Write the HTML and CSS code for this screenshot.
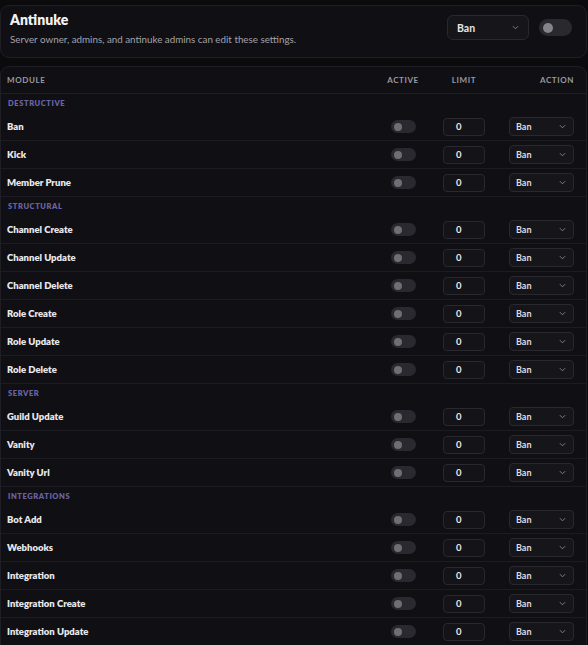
FILE: index.html
```html
<!DOCTYPE html>
<html lang="en">
<head>
    <meta charset="UTF-8">
    <meta name="viewport" content="width=device-width, initial-scale=1.0">
    <title>Antinuke</title>
    <link rel="stylesheet" href="styles.css">
</head>

<body>
    <!-- Settings header -->
    <div class="card header-card">
        <div class="header-text">
            <h1>Antinuke</h1>
            <p>Server owner, admins, and antinuke admins can edit these settings.</p>
        </div>
        <div class="header-controls">
            <div class="select select-lg">
                <span>Ban</span>
                <svg viewBox="0 0 8 5" class="chev"><path d="M1 1l3 3 3-3" /></svg>
            </div>
            <div class="toggle toggle-lg"><span class="knob"></span></div>
        </div>
    </div>

    <!-- Modules table -->
    <div class="card table-card">
        <div class="grid-row head-row">
            <div>Module</div>
            <div class="center">Active</div>
            <div class="center">Limit</div>
            <div class="right">Action</div>
        </div>

        <div class="section">Destructive</div>
        <div class="grid-row module-row"><div class="name">Ban</div><div class="center"><div class="toggle"><span class="knob"></span></div></div><div class="center"><div class="limit">0</div></div><div class="right"><div class="select"><span>Ban</span><svg viewBox="0 0 8 5" class="chev"><path d="M1 1l3 3 3-3" /></svg></div></div></div>
        <div class="grid-row module-row"><div class="name">Kick</div><div class="center"><div class="toggle"><span class="knob"></span></div></div><div class="center"><div class="limit">0</div></div><div class="right"><div class="select"><span>Ban</span><svg viewBox="0 0 8 5" class="chev"><path d="M1 1l3 3 3-3" /></svg></div></div></div>
        <div class="grid-row module-row"><div class="name">Member Prune</div><div class="center"><div class="toggle"><span class="knob"></span></div></div><div class="center"><div class="limit">0</div></div><div class="right"><div class="select"><span>Ban</span><svg viewBox="0 0 8 5" class="chev"><path d="M1 1l3 3 3-3" /></svg></div></div></div>

        <div class="section">Structural</div>
        <div class="grid-row module-row"><div class="name">Channel Create</div><div class="center"><div class="toggle"><span class="knob"></span></div></div><div class="center"><div class="limit">0</div></div><div class="right"><div class="select"><span>Ban</span><svg viewBox="0 0 8 5" class="chev"><path d="M1 1l3 3 3-3" /></svg></div></div></div>
        <div class="grid-row module-row"><div class="name">Channel Update</div><div class="center"><div class="toggle"><span class="knob"></span></div></div><div class="center"><div class="limit">0</div></div><div class="right"><div class="select"><span>Ban</span><svg viewBox="0 0 8 5" class="chev"><path d="M1 1l3 3 3-3" /></svg></div></div></div>
        <div class="grid-row module-row"><div class="name">Channel Delete</div><div class="center"><div class="toggle"><span class="knob"></span></div></div><div class="center"><div class="limit">0</div></div><div class="right"><div class="select"><span>Ban</span><svg viewBox="0 0 8 5" class="chev"><path d="M1 1l3 3 3-3" /></svg></div></div></div>
        <div class="grid-row module-row"><div class="name">Role Create</div><div class="center"><div class="toggle"><span class="knob"></span></div></div><div class="center"><div class="limit">0</div></div><div class="right"><div class="select"><span>Ban</span><svg viewBox="0 0 8 5" class="chev"><path d="M1 1l3 3 3-3" /></svg></div></div></div>
        <div class="grid-row module-row"><div class="name">Role Update</div><div class="center"><div class="toggle"><span class="knob"></span></div></div><div class="center"><div class="limit">0</div></div><div class="right"><div class="select"><span>Ban</span><svg viewBox="0 0 8 5" class="chev"><path d="M1 1l3 3 3-3" /></svg></div></div></div>
        <div class="grid-row module-row"><div class="name">Role Delete</div><div class="center"><div class="toggle"><span class="knob"></span></div></div><div class="center"><div class="limit">0</div></div><div class="right"><div class="select"><span>Ban</span><svg viewBox="0 0 8 5" class="chev"><path d="M1 1l3 3 3-3" /></svg></div></div></div>

        <div class="section">Server</div>
        <div class="grid-row module-row"><div class="name">Guild Update</div><div class="center"><div class="toggle"><span class="knob"></span></div></div><div class="center"><div class="limit">0</div></div><div class="right"><div class="select"><span>Ban</span><svg viewBox="0 0 8 5" class="chev"><path d="M1 1l3 3 3-3" /></svg></div></div></div>
        <div class="grid-row module-row"><div class="name">Vanity</div><div class="center"><div class="toggle"><span class="knob"></span></div></div><div class="center"><div class="limit">0</div></div><div class="right"><div class="select"><span>Ban</span><svg viewBox="0 0 8 5" class="chev"><path d="M1 1l3 3 3-3" /></svg></div></div></div>
        <div class="grid-row module-row"><div class="name">Vanity Url</div><div class="center"><div class="toggle"><span class="knob"></span></div></div><div class="center"><div class="limit">0</div></div><div class="right"><div class="select"><span>Ban</span><svg viewBox="0 0 8 5" class="chev"><path d="M1 1l3 3 3-3" /></svg></div></div></div>

        <div class="section">Integrations</div>
        <div class="grid-row module-row"><div class="name">Bot Add</div><div class="center"><div class="toggle"><span class="knob"></span></div></div><div class="center"><div class="limit">0</div></div><div class="right"><div class="select"><span>Ban</span><svg viewBox="0 0 8 5" class="chev"><path d="M1 1l3 3 3-3" /></svg></div></div></div>
        <div class="grid-row module-row"><div class="name">Webhooks</div><div class="center"><div class="toggle"><span class="knob"></span></div></div><div class="center"><div class="limit">0</div></div><div class="right"><div class="select"><span>Ban</span><svg viewBox="0 0 8 5" class="chev"><path d="M1 1l3 3 3-3" /></svg></div></div></div>
        <div class="grid-row module-row"><div class="name">Integration</div><div class="center"><div class="toggle"><span class="knob"></span></div></div><div class="center"><div class="limit">0</div></div><div class="right"><div class="select"><span>Ban</span><svg viewBox="0 0 8 5" class="chev"><path d="M1 1l3 3 3-3" /></svg></div></div></div>
        <div class="grid-row module-row"><div class="name">Integration Create</div><div class="center"><div class="toggle"><span class="knob"></span></div></div><div class="center"><div class="limit">0</div></div><div class="right"><div class="select"><span>Ban</span><svg viewBox="0 0 8 5" class="chev"><path d="M1 1l3 3 3-3" /></svg></div></div></div>
        <div class="grid-row module-row"><div class="name">Integration Update</div><div class="center"><div class="toggle"><span class="knob"></span></div></div><div class="center"><div class="limit">0</div></div><div class="right"><div class="select"><span>Ban</span><svg viewBox="0 0 8 5" class="chev"><path d="M1 1l3 3 3-3" /></svg></div></div></div>
    </div>
</body>
</html>
```

FILE: styles.css
```css
body {
    margin: 0;
    padding: 5px 1px 0 0;
    background-color: #0b0b0d;
    font-family: 'Lato', 'Inter', sans-serif;
    color: #e6e6ea;
    height: 640px;
    overflow: hidden;
}

.card {
    background-color: #100f13;
    border: 1px solid #1f1e25;
    border-radius: 9px;
}

.header-card {
    display: flex;
    align-items: center;
    justify-content: space-between;
    height: 53px;
    box-sizing: border-box;
    padding: 0 14px 8px 9px;
    margin-bottom: 8px;
}

.header-text h1 {
    margin: 0 0 5px;
    font-size: 14px;
    font-weight: 800;
    color: #f2f2f4;
}

.header-text p {
    margin: 0;
    font-size: 9.8px;
    color: #a3a2aa;
}

.header-controls {
    display: flex;
    align-items: center;
    gap: 10px;
}

.select {
    display: flex;
    align-items: center;
    justify-content: space-between;
    box-sizing: border-box;
    width: 65px;
    height: 19px;
    padding: 0 7px 0 6px;
    background-color: #16151a;
    border: 1px solid #29282f;
    border-radius: 4px;
    font-size: 9px;
    font-weight: 700;
    color: #dcdce0;
}

.select-lg {
    width: 82px;
    height: 25px;
    padding: 0 9px 0 9px;
    border-radius: 6px;
    font-size: 10.5px;
    color: #e6e6ea;
}

.chev {
    width: 7px;
    height: 5px;
    fill: none;
    stroke: #8c8b93;
    stroke-width: 1;
}

.toggle {
    box-sizing: border-box;
    width: 25px;
    height: 13px;
    padding: 0 3px;
    display: flex;
    align-items: center;
    background-color: #2a292f;
    border-radius: 7px;
}

.toggle .knob {
    width: 8px;
    height: 8px;
    border-radius: 50%;
    background-color: #6f6e75;
}

.toggle-lg {
    width: 33px;
    height: 17px;
    padding: 0 4px;
    border-radius: 9px;
}

.toggle-lg .knob {
    width: 10px;
    height: 10px;
    background-color: #85848b;
}

.table-card {
    border-bottom: none;
    border-radius: 9px 9px 0 0;
}

.grid-row {
    display: grid;
    grid-template-columns: 1fr 40px 82px 69px;
    align-items: center;
    padding: 0 12px 0 6px;
    box-sizing: border-box;
}

.head-row {
    height: 27px;
    border-bottom: 1px solid #1f1e25;
    font-size: 8px;
    font-weight: 700;
    letter-spacing: 0.6px;
    text-transform: uppercase;
    color: #9b9aa2;
}

.module-row {
    height: 28px;
    border-bottom: 1px solid #1c1b21;
}

.name {
    font-size: 9.5px;
    font-weight: 800;
    color: #e8e8ec;
}

.center {
    display: flex;
    justify-content: center;
}

.right {
    display: flex;
    justify-content: flex-end;
}

.section {
    height: 19px;
    display: flex;
    align-items: center;
    padding-left: 7px;
    font-size: 7.5px;
    font-weight: 800;
    letter-spacing: 0.6px;
    text-transform: uppercase;
    color: #6a64a3;
}

.limit {
    box-sizing: border-box;
    width: 42px;
    height: 18px;
    padding-left: 12px;
    display: flex;
    align-items: center;
    background-color: #141318;
    border: 1px solid #29282f;
    border-radius: 4px;
    font-size: 9.5px;
    font-weight: 700;
    color: #e8e8ec;
}
```
